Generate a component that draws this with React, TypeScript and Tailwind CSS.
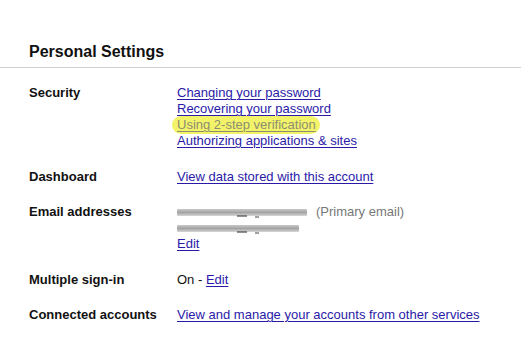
import React from "react";

const linkCls = "text-[#2a1aa8] underline underline-offset-[2px] decoration-1";

const Row: React.FC<{ label: string; className?: string; children: React.ReactNode }> = ({
    label,
    className = "",
    children,
}) => (
    <div className={`flex ${className}`}>
        <div className="w-[148px] shrink-0 font-bold text-[#111]">{label}</div>
        <div className="flex flex-col">{children}</div>
    </div>
);

// blurred out email address
const Smudge: React.FC<{ width: string }> = ({ width }) => (
    <div className="relative h-[16px] flex items-center">
        <div
            className={`${width} h-[7px] bg-gradient-to-b from-[#c8c8c8] via-[#a4a4a4] to-[#d6d6d6] rounded-[1px]`}
        />
        <div className="absolute left-[60px] top-[11px] w-[10px] h-[2px] bg-[#444] opacity-60" />
        <div className="absolute left-[78px] top-[12px] w-[4px] h-[2px] bg-[#444] opacity-50" />
    </div>
);

export default function App() {
    return (
        <div
            className="w-[521px] h-[345px] bg-white text-[13px] leading-[16px] text-[#111] overflow-hidden"
            style={{ fontFamily: '"Liberation Sans", Arial, sans-serif' }}
        >
            <h1 className="pl-[29px] pt-[42px] pb-[6px] text-[16px] leading-[19px] font-bold text-[#111]">
                Personal Settings
            </h1>
            <div className="h-px bg-[#cfcfcf]" />

            <div className="pl-[29px] pt-[17px] flex flex-col">
                <Row label="Security">
                    <a className={linkCls}>Changing your password</a>
                    <a className={linkCls}>Recovering your password</a>
                    <span className="relative">
                        <span className="absolute left-[-5px] top-[-1px] w-[148px] h-[18px] rounded-full bg-[#f2f25a] opacity-90" />
                        <a className="relative text-[#8d8d72] underline underline-offset-[2px] decoration-1">
                            Using 2-step verification
                        </a>
                    </span>
                    <a className={linkCls}>Authorizing applications &amp; sites</a>
                </Row>

                <Row label="Dashboard" className="mt-[20px]">
                    <a className={linkCls}>View data stored with this account</a>
                </Row>

                <Row label="Email addresses" className="mt-[19px]">
                    <div className="flex items-center gap-[9px]">
                        <Smudge width="w-[130px]" />
                        <span className="text-[#777]">(Primary email)</span>
                    </div>
                    <Smudge width="w-[122px]" />
                    <a className={linkCls}>Edit</a>
                </Row>

                <Row label="Multiple sign-in" className="mt-[20px]">
                    <span>
                        On - <a className={linkCls}>Edit</a>
                    </span>
                </Row>

                <Row label="Connected accounts" className="mt-[19px]">
                    <a className={linkCls}>View and manage your accounts from other services</a>
                </Row>
            </div>
        </div>
    );
}
